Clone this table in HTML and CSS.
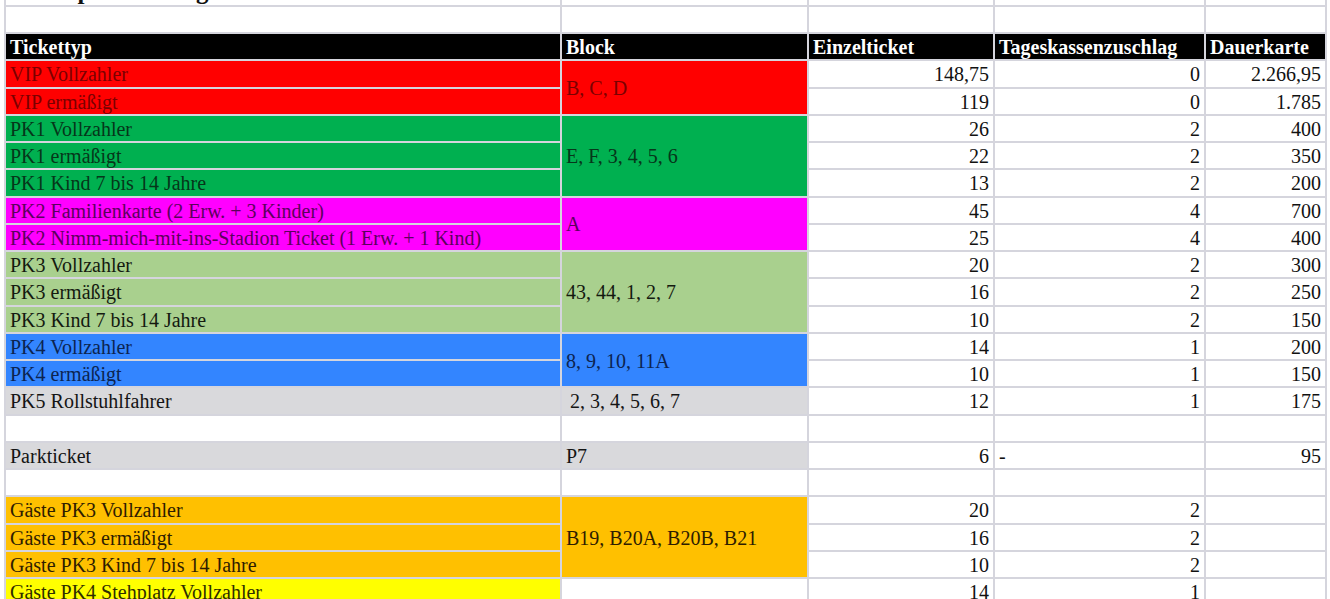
FILE: index.html
```html
<!DOCTYPE html>
<html lang="de">
<head>
<meta charset="utf-8">
<title>Ticketpreise</title>
<link rel="stylesheet" href="styles.css">
</head>
<body>
<div class="sheet">
  <div class="c title">Ticketpreise 3. Liga</div>
  <div class="c"></div><div class="c"></div><div class="c"></div><div class="c"></div>

  <div class="c"></div><div class="c"></div><div class="c"></div><div class="c"></div><div class="c"></div>

  <div class="c hd">Tickettyp</div>
  <div class="c hd">Block</div>
  <div class="c hd">Einzelticket</div>
  <div class="c hd">Tageskassenzuschlag</div>
  <div class="c hd">Dauerkarte</div>

  <div class="c red">VIP Vollzahler</div>
  <div class="c red span2">B, C, D</div>
  <div class="c num">148,75</div><div class="c num">0</div><div class="c num">2.266,95</div>
  <div class="c red">VIP ermäßigt</div>
  <div class="c num">119</div><div class="c num">0</div><div class="c num">1.785</div>

  <div class="c green">PK1 Vollzahler</div>
  <div class="c green span3">E, F, 3, 4, 5, 6</div>
  <div class="c num">26</div><div class="c num">2</div><div class="c num">400</div>
  <div class="c green">PK1 ermäßigt</div>
  <div class="c num">22</div><div class="c num">2</div><div class="c num">350</div>
  <div class="c green">PK1 Kind 7 bis 14 Jahre</div>
  <div class="c num">13</div><div class="c num">2</div><div class="c num">200</div>

  <div class="c mag">PK2 Familienkarte (2 Erw. + 3 Kinder)</div>
  <div class="c mag span2">A</div>
  <div class="c num">45</div><div class="c num">4</div><div class="c num">700</div>
  <div class="c mag">PK2 Nimm-mich-mit-ins-Stadion Ticket (1 Erw. + 1 Kind)</div>
  <div class="c num">25</div><div class="c num">4</div><div class="c num">400</div>

  <div class="c lgreen">PK3 Vollzahler</div>
  <div class="c lgreen span3">43, 44, 1, 2, 7</div>
  <div class="c num">20</div><div class="c num">2</div><div class="c num">300</div>
  <div class="c lgreen">PK3 ermäßigt</div>
  <div class="c num">16</div><div class="c num">2</div><div class="c num">250</div>
  <div class="c lgreen">PK3 Kind 7 bis 14 Jahre</div>
  <div class="c num">10</div><div class="c num">2</div><div class="c num">150</div>

  <div class="c blue">PK4 Vollzahler</div>
  <div class="c blue span2">8, 9, 10, 11A</div>
  <div class="c num">14</div><div class="c num">1</div><div class="c num">200</div>
  <div class="c blue">PK4 ermäßigt</div>
  <div class="c num">10</div><div class="c num">1</div><div class="c num">150</div>

  <div class="c gray">PK5 Rollstuhlfahrer</div>
  <div class="c gray indent">2, 3, 4, 5, 6, 7</div>
  <div class="c num">12</div><div class="c num">1</div><div class="c num">175</div>

  <div class="c"></div><div class="c"></div><div class="c"></div><div class="c"></div><div class="c"></div>

  <div class="c gray">Parkticket</div>
  <div class="c gray">P7</div>
  <div class="c num">6</div><div class="c">-</div><div class="c num">95</div>

  <div class="c"></div><div class="c"></div><div class="c"></div><div class="c"></div><div class="c"></div>

  <div class="c orange">Gäste PK3 Vollzahler</div>
  <div class="c orange span3">B19, B20A, B20B, B21</div>
  <div class="c num">20</div><div class="c num">2</div><div class="c"></div>
  <div class="c orange">Gäste PK3 ermäßigt</div>
  <div class="c num">16</div><div class="c num">2</div><div class="c"></div>
  <div class="c orange">Gäste PK3 Kind 7 bis 14 Jahre</div>
  <div class="c num">10</div><div class="c num">2</div><div class="c"></div>

  <div class="c yellow">Gäste PK4 Stehplatz Vollzahler</div>
  <div class="c"></div>
  <div class="c num">14</div><div class="c num">1</div><div class="c"></div>
</div>
</body>
</html>
```

FILE: styles.css
```css
html, body {
  margin: 0;
  padding: 0;
  background: #ffffff;
  overflow: hidden;
}

.sheet {
  display: grid;
  grid-template-columns: 554px 245px 184px 209px 119px;
  grid-auto-rows: 25.25px;
  gap: 2px;
  padding: 2px;
  margin: -22.5px 0 0 4px;
  width: max-content;
  background: #d5d5dd;
  font-family: "Liberation Serif", "Times New Roman", serif;
  font-size: 20px;
  color: #111111;
}

.c {
  background: #ffffff;
  display: flex;
  align-items: center;
  padding: 1px 4px 0;
  white-space: nowrap;
  overflow: hidden;
  line-height: 1;
}

.num {
  justify-content: flex-end;
}

.title {
  font-weight: bold;
  font-size: 25px;
  align-items: flex-start;
  padding-top: 0;
  margin-top: -1.5px;
  overflow: visible;
}

.hd {
  background: #000000;
  color: #ffffff;
  font-weight: bold;
}

.span2 { grid-row: span 2; }
.span3 { grid-row: span 3; }

.indent { padding-left: 8px; }

.red { background: #ff0000; color: #7a0000; }
.green { background: #00b050; color: #06361a; }
.mag { background: #ff00ff; color: #5c005c; }
.lgreen { background: #a9d08e; color: #141a10; }
.blue { background: #3385ff; color: #0c2450; }
.gray { background: #d9d9dc; color: #141414; }
.orange { background: #ffc000; color: #2e1c00; }
.yellow { background: #ffff00; color: #2e2e00; }
```
